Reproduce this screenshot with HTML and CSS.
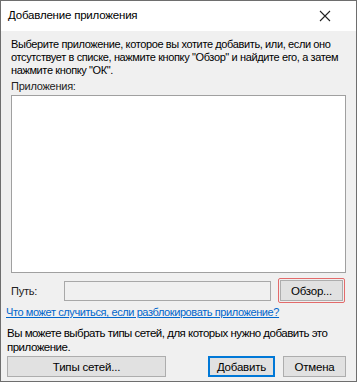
FILE: index.html
```html
<!DOCTYPE html>
<html lang="ru">
<head>
  <meta charset="UTF-8">
  <title>Добавление приложения</title>
  <link rel="stylesheet" href="styles.css">
</head>
<body>
  <div class="dialog">
    <div class="titlebar">
      <span class="title">Добавление приложения</span>
      <svg class="close" width="12" height="12" viewBox="0 0 12 12">
        <path d="M1 1 L11 11 M11 1 L1 11" stroke="#222" stroke-width="1.1" fill="none"/>
      </svg>
    </div>

    <div class="content">
      <p class="intro">Выберите приложение, которое вы хотите добавить, или, если оно отсутствует в списке, нажмите кнопку "Обзор" и найдите его, а затем нажмите кнопку "ОК".</p>

      <div class="apps-label">Приложения:</div>
      <div class="app-list"></div>

      <div class="path-row">
        <span class="path-label">Путь:</span>
        <div class="path-input"></div>
        <div class="focus-ring">
          <button class="btn browse">Обзор...</button>
        </div>
      </div>

      <a class="help-link" href="#">Что может случиться, если разблокировать приложение?</a>

      <p class="networks">Вы можете выбрать типы сетей, для которых нужно добавить это приложение.</p>

      <div class="buttons">
        <button class="btn net-types">Типы сетей...</button>
        <div class="right-buttons">
          <button class="btn primary">Добавить</button>
          <button class="btn cancel">Отмена</button>
        </div>
      </div>
    </div>
  </div>
</body>
</html>
```

FILE: styles.css
```css
html, body {
  margin: 0;
  padding: 0;
  background: #f0f0f0;
}

body {
  font-family: "Liberation Sans", Arial, sans-serif;
  font-size: 11px;
  letter-spacing: -0.25px;
  color: #000;
}

.dialog {
  width: 357px;
  height: 382px;
  box-sizing: border-box;
  border: 1px solid #6e6e6e;
  background: #f0f0f0;
  display: flex;
  flex-direction: column;
}

.titlebar {
  height: 30px;
  background: #fff;
  display: flex;
  align-items: center;
  justify-content: space-between;
  padding: 0 25px 0 7px;
  flex-shrink: 0;
}

.title {
  font-size: 11.5px;
  letter-spacing: -0.2px;
  margin-top: -2px;
}

.close {
  display: block;
}

.content {
  padding: 7px 10px 0 10px;
}

.intro {
  margin: 0;
  line-height: 13px;
  letter-spacing: -0.38px;
}

.apps-label {
  margin-top: 2px;
  line-height: 14px;
  color: #222;
}

.app-list {
  height: 176px;
  margin-top: 2px;
  background: #fff;
  border: 1px solid #a0a0a0;
}

.path-row {
  display: flex;
  align-items: center;
  margin-top: 5px;
}

.path-label {
  width: 53px;
  color: #222;
}

.path-input {
  width: 205px;
  height: 18px;
  border: 1px solid #a8a8a8;
  background: #f0f0f0;
}

.focus-ring {
  margin-left: 7px;
  border: 1px solid #e36b6b;
  border-radius: 2px;
  padding: 1px;
}

.btn {
  font-family: inherit;
  font-size: 11.5px;
  letter-spacing: -0.2px;
  background: #e1e1e1;
  border: 1px solid #adadad;
  color: #000;
  height: 21px;
  padding: 0;
  margin: 0;
  box-sizing: border-box;
}

.browse {
  display: block;
  width: 63px;
}

.help-link {
  display: block;
  margin: 2px 0 0 -5px;
  color: #0066cc;
  line-height: 14px;
  letter-spacing: -0.4px;
}

.networks {
  margin: 7px 0 0 -4px;
  line-height: 14px;
  font-size: 11.5px;
  letter-spacing: -0.5px;
}

.buttons {
  display: flex;
  justify-content: space-between;
  margin-top: 2px;
  margin-left: -4px;
}

.net-types {
  width: 159px;
}

.right-buttons {
  display: flex;
  gap: 8px;
}

.primary {
  width: 67px;
  border: 2px solid #0078d7;
}

.cancel {
  width: 63px;
}
```
